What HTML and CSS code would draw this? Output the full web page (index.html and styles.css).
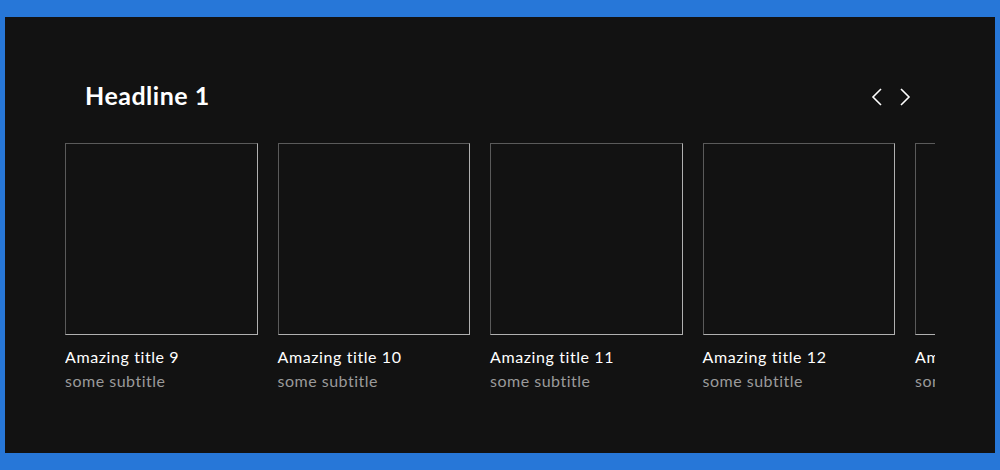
FILE: index.html
```html
<!DOCTYPE html>
<html lang="en">
<head>
    <meta charset="UTF-8">
    <meta name="viewport" content="width=device-width, initial-scale=1.0">
    <title>Carousel</title>
    <link rel="stylesheet" href="styles.css">
</head>
<body>

<div class="panel">
    <div class="carousel">
        <div class="carousel-header">
            <h2>Headline 1</h2>
            <div class="arrows">
                <button class="arrow" aria-label="Previous">
                    <svg width="12" height="18" viewBox="0 0 12 18"><polyline points="10,1 2,9 10,17" fill="none" stroke="#fff" stroke-width="1.6"/></svg>
                </button>
                <button class="arrow" aria-label="Next">
                    <svg width="12" height="18" viewBox="0 0 12 18"><polyline points="2,1 10,9 2,17" fill="none" stroke="#fff" stroke-width="1.6"/></svg>
                </button>
            </div>
        </div>

        <div class="track">
            <div class="card">
                <div class="thumb"></div>
                <div class="title">Amazing title 9</div>
                <div class="subtitle">some subtitle</div>
            </div>
            <div class="card">
                <div class="thumb"></div>
                <div class="title">Amazing title 10</div>
                <div class="subtitle">some subtitle</div>
            </div>
            <div class="card">
                <div class="thumb"></div>
                <div class="title">Amazing title 11</div>
                <div class="subtitle">some subtitle</div>
            </div>
            <div class="card">
                <div class="thumb"></div>
                <div class="title">Amazing title 12</div>
                <div class="subtitle">some subtitle</div>
            </div>
            <div class="card">
                <div class="thumb"></div>
                <div class="title">Amazing title 13</div>
                <div class="subtitle">some subtitle</div>
            </div>
        </div>
    </div>
</div>

</body>
</html>
```

FILE: styles.css
```css
body {
    margin: 0;
    background-color: #2777d8;
    font-family: Lato, "Open Sans", sans-serif;
}
.panel {
    margin: 17px 5px;
    height: 436px;
    background-color: #121212;
    padding-top: 63px;
    box-sizing: border-box;
}
.carousel {
    margin: 0 60px;
    overflow: hidden;
}
.carousel-header {
    display: flex;
    justify-content: space-between;
    align-items: center;
    padding: 0 24px 0 20px;
    height: 30px;
}
.carousel-header h2 {
    margin: 0;
    color: #ffffff;
    font-size: 25px;
    font-weight: bold;
    letter-spacing: 0.5px;
}
.arrows {
    display: flex;
    gap: 16px;
    margin-top: 3px;
}
.arrow {
    background: none;
    border: none;
    padding: 0;
    width: 12px;
    height: 18px;
    cursor: pointer;
    display: flex;
}
.track {
    display: flex;
    gap: 20px;
    margin-top: 33px;
}
.card {
    flex: 0 0 192.5px;
}
.thumb {
    height: 192px;
    border: 1px solid;
    border-color: #5a5a5a #b0b0b0 #b0b0b0 #5a5a5a;
    box-sizing: border-box;
}
.title {
    margin-top: 11px;
    color: #ffffff;
    font-size: 16px;
    line-height: 22px;
    letter-spacing: 0.6px;
}
.subtitle {
    margin-top: 2px;
    color: #9a9a9a;
    font-size: 16px;
    line-height: 22px;
    letter-spacing: 0.5px;
}
```
